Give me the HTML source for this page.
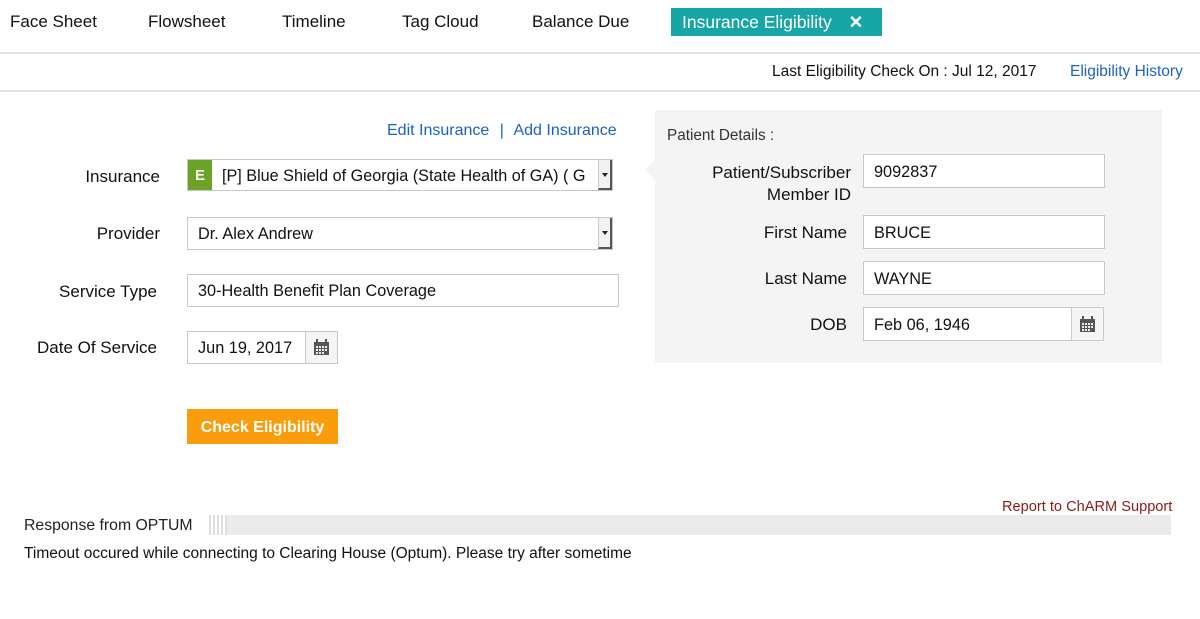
<!DOCTYPE html>
<html><head><meta charset="utf-8"><style>
*{margin:0;padding:0;box-sizing:border-box}
body{width:1200px;height:619px;background:#fff;font-family:"Liberation Sans",sans-serif;color:#111;position:relative;overflow:hidden}
.a{position:absolute;white-space:nowrap}
.tab{font-size:17px;top:12px}
.lbl{font-size:17px;text-align:right}
.box{position:absolute;background:#fff;border:1px solid #c8c8c8;font-size:16.3px;padding-left:10px;display:flex;align-items:center;padding-top:2px}
.cal{position:absolute;right:0;top:0;bottom:0;width:32px;border-left:1px solid #ccc;background:#f5f5f5;display:flex;align-items:center;justify-content:center}
.dd{position:absolute;right:0;top:0;bottom:0;width:14px;border-left:1px solid #ccc;border-right:2px solid #555;border-bottom:2px solid #555;background:#f2f2f2}
.dd:after{content:"";position:absolute;left:3px;top:45%;border-left:3px solid transparent;border-right:3px solid transparent;border-top:4px solid #222}
</style></head><body>
<div class="a tab" style="left:10px">Face Sheet</div>
<div class="a tab" style="left:148px">Flowsheet</div>
<div class="a tab" style="left:282px">Timeline</div>
<div class="a tab" style="left:402px">Tag Cloud</div>
<div class="a tab" style="left:532px">Balance Due</div>
<div class="a" style="left:671px;top:8px;width:211px;height:28px;background:#17a5a6;color:#fff;font-size:17.5px;padding:4px 0 0 11px">Insurance Eligibility <span style="margin-left:12px;font-weight:bold">✕</span></div>
<div class="a" style="left:0;top:52px;width:1200px;height:2px;background:#e2e2e2"></div>
<div class="a" style="left:772px;top:63px;font-size:15.5px">Last Eligibility Check On : Jul 12, 2017</div>
<div class="a" style="left:1070px;top:63px;font-size:15.5px;color:#1a63c4">Eligibility History</div>
<div class="a" style="left:0;top:90px;width:1200px;height:2px;background:#e2e2e2"></div>

<div class="a" style="left:387px;top:122px;font-size:16px;color:#1a63c4">Edit Insurance <span style="color:#1a63c4;margin:0 6px">|</span> Add Insurance</div>

<div class="a lbl" style="right:1040px;top:167px">Insurance</div>
<div class="box" style="left:187px;top:159px;width:426px;height:32px;padding-left:0;padding-top:0">
<div style="width:24px;height:30px;background:#6aa325;color:#fff;font-weight:bold;font-size:15px;display:flex;align-items:center;justify-content:center">E</div>
<span style="margin-left:10px;font-size:16.2px;padding-top:2px">[P] Blue Shield of Georgia (State Health of GA) ( G</span><div class="dd"></div></div>

<div class="a lbl" style="right:1040px;top:224px">Provider</div>
<div class="box" style="left:187px;top:217px;width:426px;height:33px">Dr. Alex Andrew<div class="dd"></div></div>

<div class="a lbl" style="right:1043px;top:282px">Service Type</div>
<div class="box" style="left:187px;top:274px;width:432px;height:33px">30-Health Benefit Plan Coverage</div>

<div class="a lbl" style="right:1043px;top:338px">Date Of Service</div>
<div class="box" style="left:187px;top:331px;width:151px;height:33px">Jun 19, 2017<div class="cal"><svg width="17" height="17" viewBox="0 0 17 17"><rect x="1" y="3" width="15" height="13" fill="#555"/><rect x="3" y="0" width="2" height="4" fill="#555"/><rect x="12" y="0" width="2" height="4" fill="#555"/><g fill="#eee"><rect x="3" y="7" width="2" height="2"/><rect x="6" y="7" width="2" height="2"/><rect x="9" y="7" width="2" height="2"/><rect x="12" y="7" width="2" height="2"/><rect x="3" y="10" width="2" height="2"/><rect x="6" y="10" width="2" height="2"/><rect x="9" y="10" width="2" height="2"/><rect x="12" y="10" width="2" height="2"/><rect x="3" y="13" width="2" height="2"/><rect x="6" y="13" width="2" height="2"/><rect x="9" y="13" width="2" height="2"/></g></svg></div></div>

<div class="a" style="left:187px;top:409px;width:151px;height:35px;background:#f99d0a;color:#fff;font-weight:bold;font-size:16px;display:flex;align-items:center;justify-content:center;padding-top:2px">Check Eligibility</div>

<div class="a" style="left:655px;top:110px;width:507px;height:253px;background:#f4f4f4"></div>
<div class="a" style="left:645px;top:160px;width:0;height:0;border-top:10px solid transparent;border-bottom:10px solid transparent;border-right:10px solid #f4f4f4"></div>
<div class="a" style="left:667px;top:127px;font-size:15.3px;color:#333">Patient Details :</div>
<div class="a lbl" style="right:349px;top:162px;line-height:22px">Patient/Subscriber<br>Member ID</div>
<div class="box" style="left:863px;top:154px;width:242px;height:34px">9092837</div>
<div class="a lbl" style="right:353px;top:223px">First Name</div>
<div class="box" style="left:863px;top:215px;width:242px;height:34px">BRUCE</div>
<div class="a lbl" style="right:353px;top:269px">Last Name</div>
<div class="box" style="left:863px;top:261px;width:242px;height:34px">WAYNE</div>
<div class="a lbl" style="right:353px;top:315px">DOB</div>
<div class="box" style="left:863px;top:307px;width:241px;height:34px">Feb 06, 1946<div class="cal"><svg width="17" height="17" viewBox="0 0 17 17"><rect x="1" y="3" width="15" height="13" fill="#555"/><rect x="3" y="0" width="2" height="4" fill="#555"/><rect x="12" y="0" width="2" height="4" fill="#555"/><g fill="#eee"><rect x="3" y="7" width="2" height="2"/><rect x="6" y="7" width="2" height="2"/><rect x="9" y="7" width="2" height="2"/><rect x="12" y="7" width="2" height="2"/><rect x="3" y="10" width="2" height="2"/><rect x="6" y="10" width="2" height="2"/><rect x="9" y="10" width="2" height="2"/><rect x="12" y="10" width="2" height="2"/><rect x="3" y="13" width="2" height="2"/><rect x="6" y="13" width="2" height="2"/><rect x="9" y="13" width="2" height="2"/></g></svg></div></div>

<div class="a" style="left:1002px;top:499px;font-size:14.6px;color:#8b1a1a">Report to ChARM Support</div>
<div class="a" style="left:24px;top:517px;font-size:15.8px;color:#222">Response from OPTUM</div>
<div class="a" style="left:209px;top:515px;width:18px;height:20px;background:repeating-linear-gradient(90deg,#ddd 0 2px,#fff 2px 4px)"></div>
<div class="a" style="left:227px;top:515px;width:944px;height:20px;background:#ebebeb"></div>
<div class="a" style="left:24px;top:545px;font-size:15.5px">Timeout occured while connecting to Clearing House (Optum). Please try after sometime</div>
</body></html>
